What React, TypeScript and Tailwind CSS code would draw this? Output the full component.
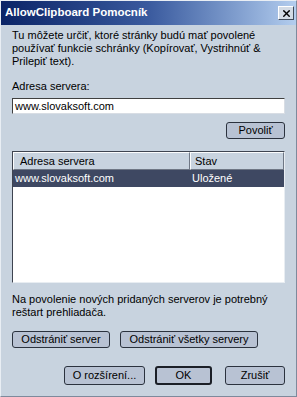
import { X } from "lucide-react";

const font = { fontFamily: '"Liberation Sans", Arial, sans-serif' };

type BtnProps = {
  label: string;
  className?: string;
  primary?: boolean;
};

const WinButton = ({ label, className = "", primary = false }: BtnProps) => {
  return (
    <div
      className={
        "flex items-center justify-center rounded-[3px] bg-[#b8c2d3] text-[11px] text-black " +
        (primary ? "border-2 border-[#1b1f27] " : "border border-[#2b323e] ") +
        className
      }
    >
      <span className="leading-none">{label}</span>
    </div>
  );
};

export default function App() {
  return (
    <div
      className="flex h-[397px] w-[297px] flex-col border border-[#7e8a9c] border-l-[#e9eef4] border-t-[#e9eef4] bg-[#c8d3df] text-black"
      style={font}
    >
      {/* title bar */}
      <div className="flex h-[24px] items-center justify-between bg-gradient-to-r from-[#0b2467] via-[#3a5a9e] to-[#b3cdee] pl-[4px] pr-[2px]">
        <span className="text-[11.5px] font-bold text-white">AllowClipboard Pomocník</span>
        <div className="flex h-[14px] w-[16px] items-center justify-center border border-[#fff] border-b-[#404a58] border-r-[#404a58] bg-[#d3dbe5]">
          <X size={11} strokeWidth={3} color="#000" />
        </div>
      </div>

      <div className="flex flex-1 flex-col px-[11px]">
        <p className="mt-[4px] text-[11px] leading-[13px]">
          Tu môžete určiť, ktoré stránky budú mať povolené používať funkcie schránky (Kopírovať, Vystrihnúť &amp; Prilepiť text).
        </p>

        <div className="mt-[12px] text-[11px] leading-[13px]">Adresa servera:</div>
        <div className="mt-[5px] flex h-[16px] items-center border border-[#404040] border-b-[#d8dde4] border-r-[#d8dde4] bg-white pl-[2px] text-[11px]">
          www.slovaksoft.com
        </div>

        <div className="mt-[8px] flex justify-end">
          <WinButton label="Povoliť" className="h-[17px] w-[59px]" />
        </div>

        {/* list */}
        <div className="mt-[12px] flex h-[132px] flex-col border border-[#3e4450] border-b-[#e8edf2] border-r-[#e8edf2] bg-white">
          <div className="flex h-[18px] text-[11px]">
            <div className="flex w-[177px] items-center border border-[#fbfcfd] border-b-[#6f7785] border-r-[#6f7785] bg-[#c8d3df] pl-[6px]">
              Adresa servera
            </div>
            <div className="flex flex-1 items-center border border-[#fbfcfd] border-b-[#6f7785] border-r-[#6f7785] bg-[#c8d3df] pl-[4px]">
              Stav
            </div>
          </div>
          <div className="flex h-[17px] items-center bg-[#3e4862] text-[11px] text-white">
            <span className="w-[179px] pl-[2px]">www.slovaksoft.com</span>
            <span>Uložené</span>
          </div>
        </div>

        <p className="mt-[10px] text-[11px] leading-[13px]">
          Na povolenie nových pridaných serverov je potrebný reštart prehliadača.
        </p>

        <div className="mt-[12px] flex gap-[10px]">
          <WinButton label="Odstrániť server" className="h-[17px] w-[98px]" />
          <WinButton label="Odstrániť všetky servery" className="h-[17px] w-[138px]" />
        </div>

        <div className="mt-[18px] flex justify-end">
          <WinButton label="O rozšírení..." className="h-[19px] w-[81px]" />
          <WinButton label="OK" primary className="ml-[10px] h-[19px] w-[57px]" />
          <WinButton label="Zrušiť" className="ml-[13px] h-[19px] w-[60px]" />
        </div>
      </div>
    </div>
  );
}
